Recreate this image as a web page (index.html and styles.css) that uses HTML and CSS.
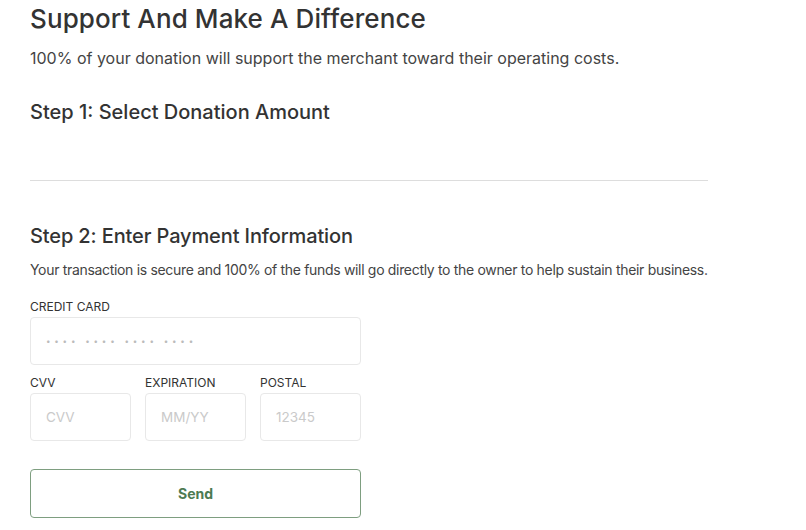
FILE: index.html
```html
<!DOCTYPE html>
<html>
<head>
<meta charset="utf-8">
<link rel="stylesheet" href="styles.css">
</head>
<body>
<main class="page">
  <h1 class="title">Support And Make A Difference</h1>
  <p class="lead">100% of your donation will support the merchant toward their operating costs.</p>
  <h2 class="step step-1">Step 1: Select Donation Amount</h2>
  <hr class="divider">
  <h2 class="step step-2">Step 2: Enter Payment Information</h2>
  <p class="note">Your transaction is secure and 100% of the funds will go directly to the owner to help sustain their business.</p>
  <form class="form">
    <label class="field">
      <span class="label">CREDIT CARD</span>
      <span class="input card-input"><span class="dots">•••• •••• •••• ••••</span></span>
    </label>
    <div class="row">
      <label class="field">
        <span class="label">CVV</span>
        <span class="input small"><span class="ph">CVV</span></span>
      </label>
      <label class="field">
        <span class="label">EXPIRATION</span>
        <span class="input small"><span class="ph">MM/YY</span></span>
      </label>
      <label class="field">
        <span class="label">POSTAL</span>
        <span class="input small"><span class="ph">12345</span></span>
      </label>
    </div>
    <button type="button" class="send">Send</button>
  </form>
</main>
</body>
</html>
```
FILE: styles.css
```css
* { box-sizing: border-box; }
html, body { margin: 0; padding: 0; background: #fff; }
body {
  font-family: Inter, "Noto Sans", "Liberation Sans", sans-serif;
  color: #333;
}
.page {
  padding: 3px 0 0 30px;
  width: 708px;
}
.title {
  margin: 0;
  font-size: 26px;
  font-weight: 500;
  line-height: 32px;
  color: #333;
  letter-spacing: 0.1px;
}
.lead {
  margin: 11px 0 0;
  font-size: 16px;
  line-height: 24px;
  color: #444;
}
.step {
  margin: 0;
  font-size: 20px;
  font-weight: 500;
  line-height: 26px;
  color: #333;
}
.step-1 { margin-top: 29px; }
.divider {
  margin: 55px 0 0;
  border: 0;
  border-top: 1px solid #ddd;
  height: 0;
}
.step-2 { margin-top: 42px; letter-spacing: -0.12px; }
.note {
  margin: 11px 0 0;
  font-size: 14px;
  line-height: 20px;
  color: #444;
  letter-spacing: -0.32px;
  white-space: nowrap;
}
.form {
  width: 331px;
  margin-top: 20px;
}
.field { display: block; }
.label {
  display: block;
  font-size: 12px;
  line-height: 14px;
  color: #333;
  margin-bottom: 3px;
}
.input {
  display: flex;
  align-items: center;
  height: 48px;
  border: 1px solid #e8e8e8;
  border-radius: 4px;
  padding-left: 15px;
  background: #fff;
}
.dots {
  font-size: 8px;
  letter-spacing: 3.8px;
  color: #bbb;
}
.row {
  display: grid;
  grid-template-columns: repeat(3, 101px);
  column-gap: 14px;
  margin-top: 11px;
}
.ph {
  font-size: 13.5px;
  color: #cacaca;
}
.send {
  display: block;
  width: 331px;
  height: 49px;
  margin-top: 28px;
  border: 1px solid #7e9e80;
  border-radius: 4px;
  background: #fff;
  color: #4c7a52;
  font-family: Inter, "Noto Sans", "Liberation Sans", sans-serif;
  font-size: 14px;
  font-weight: 700;
  padding: 0;
}
```
